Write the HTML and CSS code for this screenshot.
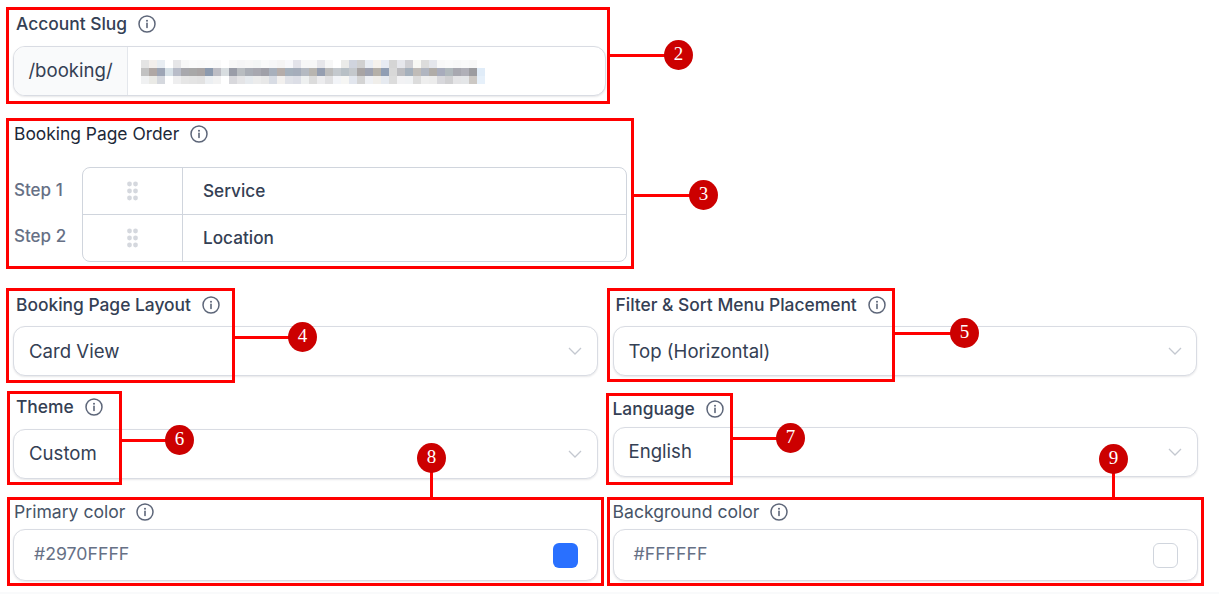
FILE: index.html
```html
<!DOCTYPE html>
<html lang="en">
<head>
    <meta charset="UTF-8">
    <meta name="viewport" content="width=device-width, initial-scale=1.0">
    <title>Booking Page Settings</title>
    <link rel="stylesheet" href="styles.css">
</head>
<body>
    <svg class="defs" width="0" height="0">
        <symbol id="info" viewBox="0 0 18 18">
            <circle cx="9" cy="9" r="8" fill="none" stroke="#5d6679" stroke-width="1.5"/>
            <path d="M9 8.4v4" fill="none" stroke="#5d6679" stroke-width="1.6" stroke-linecap="round"/>
            <circle cx="9" cy="5.7" r="1" fill="#5d6679"/>
        </symbol>
        <symbol id="chevron" viewBox="0 0 14 8">
            <path d="M1 1l6 6 6-6" fill="none" stroke="#c4c8d0" stroke-width="1.3"/>
        </symbol>
        <symbol id="grip" viewBox="0 0 10 20">
            <circle cx="2" cy="3" r="2.4" fill="#d5d8de"/>
            <circle cx="8" cy="3" r="2.4" fill="#d5d8de"/>
            <circle cx="2" cy="10" r="2.4" fill="#d5d8de"/>
            <circle cx="8" cy="10" r="2.4" fill="#d5d8de"/>
            <circle cx="2" cy="17" r="2.4" fill="#d5d8de"/>
            <circle cx="8" cy="17" r="2.4" fill="#d5d8de"/>
        </symbol>
    </svg>

    <div class="page">
        <div class="label-row inset slug-label">
            <span>Account Slug</span>
            <svg class="info"><use href="#info"/></svg>
        </div>
        <div class="slug-input">
            <div class="prefix">/booking/</div>
            <div class="slug-value">
                <svg class="blur" width="344" height="24" viewBox="0 0 43 3" preserveAspectRatio="none" shape-rendering="crispEdges">
                    <g id="row-top">
                        <rect x="0" y="0" width="1" height="1" fill="#e4e4e4"/><rect x="1" y="0" width="1" height="1" fill="#f3efec"/><rect x="2" y="0" width="1" height="1" fill="#e8edf2"/><rect x="4" y="0" width="1" height="1" fill="#e6e6e8"/><rect x="5" y="0" width="1" height="1" fill="#f8f8f8"/><rect x="6" y="0" width="1" height="1" fill="#fbfbfb"/><rect x="7" y="0" width="1" height="1" fill="#fafafa"/><rect x="8" y="0" width="1" height="1" fill="#fbfbfb"/><rect x="9" y="0" width="1" height="1" fill="#fafafa"/><rect x="11" y="0" width="1" height="1" fill="#f8f8f8"/><rect x="12" y="0" width="1" height="1" fill="#f5f5f6"/><rect x="13" y="0" width="1" height="1" fill="#f7f7f7"/><rect x="14" y="0" width="1" height="1" fill="#f4f6f6"/><rect x="15" y="0" width="1" height="1" fill="#fafafa"/><rect x="16" y="0" width="1" height="1" fill="#f7f7f8"/><rect x="17" y="0" width="1" height="1" fill="#f5f4f4"/><rect x="18" y="0" width="1" height="1" fill="#f8f8fb"/><rect x="19" y="0" width="1" height="1" fill="#e3e3ea"/><rect x="20" y="0" width="1" height="1" fill="#f7f7f7"/><rect x="21" y="0" width="1" height="1" fill="#f7f7f7"/><rect x="22" y="0" width="1" height="1" fill="#e6e6ea"/><rect x="23" y="0" width="1" height="1" fill="#f7f7f7"/><rect x="25" y="0" width="1" height="1" fill="#ebebe9"/><rect x="26" y="0" width="1" height="1" fill="#d0d4de"/><rect x="27" y="0" width="1" height="1" fill="#d0d0d0"/><rect x="28" y="0" width="1" height="1" fill="#e9edf3"/><rect x="29" y="0" width="1" height="1" fill="#f6f2ec"/><rect x="30" y="0" width="1" height="1" fill="#e7ebf3"/><rect x="31" y="0" width="1" height="1" fill="#d5d5d5"/><rect x="32" y="0" width="1" height="1" fill="#e6e7ec"/><rect x="33" y="0" width="1" height="1" fill="#d0d0d4"/><rect x="34" y="0" width="1" height="1" fill="#f8f8f4"/><rect x="35" y="0" width="1" height="1" fill="#dcdcdc"/><rect x="36" y="0" width="1" height="1" fill="#e4e6ec"/><rect x="37" y="0" width="1" height="1" fill="#f8f8f8"/><rect x="38" y="0" width="1" height="1" fill="#fafafa"/><rect x="39" y="0" width="1" height="1" fill="#f8f8f8"/><rect x="40" y="0" width="1" height="1" fill="#fafafa"/><rect x="41" y="0" width="1" height="1" fill="#f8f8f8"/>
                    </g>
                    <g id="row-middle">
                        <rect x="0" y="1" width="1" height="1" fill="#c2c2c2"/><rect x="1" y="1" width="1" height="1" fill="#b0a8a5"/><rect x="2" y="1" width="1" height="1" fill="#9da5b5"/><rect x="3" y="1" width="1" height="1" fill="#d6e0e6"/><rect x="4" y="1" width="1" height="1" fill="#b8bcc8"/><rect x="5" y="1" width="1" height="1" fill="#a8a8ad"/><rect x="6" y="1" width="1" height="1" fill="#a8a8a8"/><rect x="7" y="1" width="1" height="1" fill="#a8a4a4"/><rect x="8" y="1" width="1" height="1" fill="#8c9aae"/><rect x="9" y="1" width="1" height="1" fill="#bdbdc4"/><rect x="10" y="1" width="1" height="1" fill="#d8dde0"/><rect x="11" y="1" width="1" height="1" fill="#9a9da8"/><rect x="12" y="1" width="1" height="1" fill="#b8bcc0"/><rect x="13" y="1" width="1" height="1" fill="#a9adb5"/><rect x="14" y="1" width="1" height="1" fill="#a8a8b0"/><rect x="15" y="1" width="1" height="1" fill="#a0a0a8"/><rect x="16" y="1" width="1" height="1" fill="#a8b0bc"/><rect x="17" y="1" width="1" height="1" fill="#b5adaa"/><rect x="18" y="1" width="1" height="1" fill="#a5b0bc"/><rect x="19" y="1" width="1" height="1" fill="#a5adbb"/><rect x="20" y="1" width="1" height="1" fill="#b5bac2"/><rect x="21" y="1" width="1" height="1" fill="#b8b5b0"/><rect x="22" y="1" width="1" height="1" fill="#959eb0"/><rect x="23" y="1" width="1" height="1" fill="#bcbcbc"/><rect x="24" y="1" width="1" height="1" fill="#c4c9ce"/><rect x="25" y="1" width="1" height="1" fill="#b8c0c6"/><rect x="26" y="1" width="1" height="1" fill="#c4c8cc"/><rect x="27" y="1" width="1" height="1" fill="#a8a4a4"/><rect x="28" y="1" width="1" height="1" fill="#9ea2b0"/><rect x="29" y="1" width="1" height="1" fill="#b5b0a8"/><rect x="30" y="1" width="1" height="1" fill="#909eb4"/><rect x="31" y="1" width="1" height="1" fill="#d8d8d8"/><rect x="32" y="1" width="1" height="1" fill="#bcbcc0"/><rect x="33" y="1" width="1" height="1" fill="#a5b0bc"/><rect x="34" y="1" width="1" height="1" fill="#c0bcb8"/><rect x="35" y="1" width="1" height="1" fill="#b0b5c0"/><rect x="36" y="1" width="1" height="1" fill="#b0aca8"/><rect x="37" y="1" width="1" height="1" fill="#a8acbc"/><rect x="38" y="1" width="1" height="1" fill="#b0b8bc"/><rect x="39" y="1" width="1" height="1" fill="#a8a8b0"/><rect x="40" y="1" width="1" height="1" fill="#b0b0b8"/><rect x="41" y="1" width="1" height="1" fill="#9c9ca0"/><rect x="42" y="1" width="1" height="1" fill="#e0ecf8"/>
                    </g>
                    <g id="row-bottom">
                        <rect x="0" y="2" width="1" height="1" fill="#f0f1f2"/><rect x="1" y="2" width="1" height="1" fill="#eaeae6"/><rect x="2" y="2" width="1" height="1" fill="#d5d8de"/><rect x="4" y="2" width="1" height="1" fill="#eeeeef"/><rect x="5" y="2" width="1" height="1" fill="#e6e6e6"/><rect x="6" y="2" width="1" height="1" fill="#e4e4e4"/><rect x="7" y="2" width="1" height="1" fill="#e2e2e2"/><rect x="8" y="2" width="1" height="1" fill="#eceff2"/><rect x="9" y="2" width="1" height="1" fill="#f2f2f2"/><rect x="11" y="2" width="1" height="1" fill="#d8d8dc"/><rect x="12" y="2" width="1" height="1" fill="#e4e4e6"/><rect x="13" y="2" width="1" height="1" fill="#e6eaee"/><rect x="14" y="2" width="1" height="1" fill="#ececec"/><rect x="15" y="2" width="1" height="1" fill="#e8e8e8"/><rect x="16" y="2" width="1" height="1" fill="#d8dce4"/><rect x="17" y="2" width="1" height="1" fill="#f2f0ee"/><rect x="18" y="2" width="1" height="1" fill="#e0e2e8"/><rect x="19" y="2" width="1" height="1" fill="#dcdee6"/><rect x="20" y="2" width="1" height="1" fill="#eef0f0"/><rect x="21" y="2" width="1" height="1" fill="#dcdcdc"/><rect x="22" y="2" width="1" height="1" fill="#ececee"/><rect x="23" y="2" width="1" height="1" fill="#e0e0e2"/><rect x="24" y="2" width="1" height="1" fill="#f2f4f8"/><rect x="25" y="2" width="1" height="1" fill="#f6f6f4"/><rect x="26" y="2" width="1" height="1" fill="#e2e6ee"/><rect x="27" y="2" width="1" height="1" fill="#d4d4d4"/><rect x="28" y="2" width="1" height="1" fill="#eef0f4"/><rect x="29" y="2" width="1" height="1" fill="#f0eeea"/><rect x="30" y="2" width="1" height="1" fill="#e6eaf0"/><rect x="31" y="2" width="1" height="1" fill="#dcdcdc"/><rect x="32" y="2" width="1" height="1" fill="#f2f2f4"/><rect x="33" y="2" width="1" height="1" fill="#f0f2f4"/><rect x="34" y="2" width="1" height="1" fill="#dcdcdc"/><rect x="35" y="2" width="1" height="1" fill="#eeeeee"/><rect x="36" y="2" width="1" height="1" fill="#ececec"/><rect x="37" y="2" width="1" height="1" fill="#d8d8dc"/><rect x="38" y="2" width="1" height="1" fill="#d0d0d2"/><rect x="39" y="2" width="1" height="1" fill="#e4e4e6"/><rect x="40" y="2" width="1" height="1" fill="#e4e6e8"/><rect x="41" y="2" width="1" height="1" fill="#ccc8c4"/><rect x="42" y="2" width="1" height="1" fill="#e6f0fa"/>
                    </g>
                </svg>
            </div>
        </div>

        <div class="label-row order-label">
            <span>Booking Page Order</span>
            <svg class="info"><use href="#info"/></svg>
        </div>
        <div class="order">
            <div class="steps">
                <div class="step">Step 1</div>
                <div class="step">Step 2</div>
            </div>
            <div class="order-table">
                <div class="order-row">
                    <div class="grip-cell"><svg class="grip"><use href="#grip"/></svg></div>
                    <div class="order-name">Service</div>
                </div>
                <div class="order-row">
                    <div class="grip-cell"><svg class="grip"><use href="#grip"/></svg></div>
                    <div class="order-name">Location</div>
                </div>
            </div>
        </div>

        <div class="columns">
            <div class="column">
                <div class="label-row inset layout-label">
                    <span>Booking Page Layout</span>
                    <svg class="info"><use href="#info"/></svg>
                </div>
                <div class="select layout-select">
                    <span>Card View</span>
                    <svg class="chevron"><use href="#chevron"/></svg>
                </div>
                <div class="label-row inset theme-label">
                    <span>Theme</span>
                    <svg class="info"><use href="#info"/></svg>
                </div>
                <div class="select theme-select">
                    <span>Custom</span>
                    <svg class="chevron"><use href="#chevron"/></svg>
                </div>
                <div class="label-row color-label primary-label">
                    <span>Primary color</span>
                    <svg class="info"><use href="#info"/></svg>
                </div>
                <div class="color-input">
                    <span>#2970FFFF</span>
                    <div class="swatch swatch-blue"></div>
                </div>
            </div>
            <div class="column">
                <div class="label-row inset layout-label">
                    <span>Filter &amp; Sort Menu Placement</span>
                    <svg class="info"><use href="#info"/></svg>
                </div>
                <div class="select layout-select placement-select">
                    <span>Top (Horizontal)</span>
                    <svg class="chevron"><use href="#chevron"/></svg>
                </div>
                <div class="label-row language-label">
                    <span>Language</span>
                    <svg class="info"><use href="#info"/></svg>
                </div>
                <div class="select language-select wide">
                    <span>English</span>
                    <svg class="chevron"><use href="#chevron"/></svg>
                </div>
                <div class="label-row color-label background-label">
                    <span>Background color</span>
                    <svg class="info"><use href="#info"/></svg>
                </div>
                <div class="color-input wide">
                    <span>#FFFFFF</span>
                    <div class="swatch swatch-white"></div>
                </div>
            </div>
        </div>
    </div>

    <!-- red callouts drawn over the form -->
    <div class="box box-2"></div>
    <div class="box box-3"></div>
    <div class="box box-4"></div>
    <div class="box box-5"></div>
    <div class="box box-6"></div>
    <div class="box box-7"></div>
    <div class="box box-8"></div>
    <div class="box box-9"></div>
    <div class="line line-2"></div>
    <div class="line line-3"></div>
    <div class="line line-4"></div>
    <div class="line line-5"></div>
    <div class="line line-6"></div>
    <div class="line line-7"></div>
    <div class="line line-8"></div>
    <div class="line line-9"></div>
    <div class="badge badge-2">2</div>
    <div class="badge badge-3">3</div>
    <div class="badge badge-4">4</div>
    <div class="badge badge-5">5</div>
    <div class="badge badge-6">6</div>
    <div class="badge badge-7">7</div>
    <div class="badge badge-8">8</div>
    <div class="badge badge-9">9</div>
</body>
</html>
```

FILE: styles.css
```css
* {
    box-sizing: border-box;
}

body {
    margin: 0;
    background-color: white;
    font-family: Inter, "Liberation Sans", sans-serif;
    color: #344054;
}

.defs {
    position: absolute;
}

.page {
    width: 1219px;
    height: 594px;
    padding: 14px 22px 0 13px;
    border-bottom: 2px solid #f9fafb;
    overflow: hidden;
}

.label-row {
    display: flex;
    align-items: center;
    gap: 11px;
    height: 20px;
    font-size: 17.4px;
    font-weight: 500;
    white-space: nowrap;
}

.label-row span {
    margin-top: -2px;
}

.label-row.inset {
    padding-left: 3px;
}

.info {
    width: 18px;
    height: 18px;
    flex-shrink: 0;
}

.order-label {
    margin-top: 28px;
    padding-left: 1px;
    color: #1d2939;
    font-weight: 400;
}

.slug-input {
    display: flex;
    width: 593px;
    height: 50px;
    margin-top: 12px;
    background-color: white;
    border: 1px solid #d9dce3;
    border-radius: 12px;
    box-shadow: 0 1px 2px rgba(16, 24, 40, 0.1);
    overflow: hidden;
}

.prefix {
    display: flex;
    align-items: center;
    justify-content: center;
    width: 114px;
    padding-bottom: 2px;
    background-color: #f9fafb;
    border-right: 1px solid #e4e7ec;
    font-size: 18.6px;
}

.slug-value {
    display: flex;
    align-items: center;
    padding-left: 13px;
}

.blur {
    display: block;
    margin-top: 2px;
}

.order {
    display: flex;
    margin-top: 23px;
}

.steps {
    width: 69px;
    padding-left: 1px;
}

.step {
    height: 46px;
    padding-top: 13px;
    font-size: 17px;
    font-weight: 500;
    color: #667085;
}

.order-table {
    width: 545px;
    height: 95px;
    border: 1px solid #d0d5dd;
    border-radius: 8px;
}

.order-row {
    display: flex;
    height: 46px;
}

.order-row + .order-row {
    height: 47px;
    border-top: 1px solid #d0d5dd;
}

.grip-cell {
    display: flex;
    align-items: center;
    justify-content: center;
    width: 100px;
    border-right: 1px solid #d0d5dd;
}

.grip {
    width: 13px;
    height: 20px;
}

.order-name {
    display: flex;
    align-items: center;
    padding: 0 0 2px 20px;
    font-size: 17.2px;
    font-weight: 500;
}

.columns {
    display: flex;
    gap: 15px;
    margin-top: 33px;
}

.column {
    width: 585px;
}

.select,
.color-input {
    display: flex;
    align-items: center;
    justify-content: space-between;
    background-color: white;
    border: 1px solid #d9dce3;
    border-radius: 12px;
    box-shadow: 0 1px 2px rgba(16, 24, 40, 0.1);
}

.select {
    height: 50px;
    padding: 0 15px;
    font-size: 18.6px;
}

.chevron {
    width: 14px;
    height: 8px;
}

.wide {
    margin-right: -1px;
}

.layout-select {
    margin-top: 11px;
}

.placement-select {
    padding-right: 14px;
}

.theme-label {
    margin-top: 21px;
}

.theme-select {
    margin-top: 12px;
}

.theme-select span {
    margin-top: -3px;
}

.language-label {
    margin-top: 23px;
}

.language-select {
    margin-top: 8px;
}

.language-select span {
    margin-top: -2px;
}

.primary-label {
    margin-top: 23px;
    padding-left: 1px;
}

.background-label {
    margin-top: 25px;
}

.color-label {
    color: #475467;
    font-size: 17.6px;
    font-weight: 400;
}

.color-input {
    height: 52px;
    margin-top: 7px;
    padding: 0 19px 0 20px;
    font-size: 17.7px;
    color: #667085;
}

.color-input span {
    margin-top: -4px;
}

.swatch {
    width: 25px;
    height: 25px;
    border-radius: 6px;
}

.swatch-blue {
    background-color: #2970ff;
}

.swatch-white {
    background-color: white;
    border: 1px solid #d0d5dd;
}

/* callouts */
.box,
.line,
.badge {
    position: absolute;
}

.box {
    border: 3px solid #ff0000;
}

.box-2 { left: 6px; top: 7px; width: 604px; height: 97px; }
.box-3 { left: 6px; top: 118px; width: 628px; height: 151px; }
.box-4 { left: 6px; top: 288px; width: 229px; height: 95px; }
.box-5 { left: 607px; top: 288px; width: 288px; height: 94px; }
.box-6 { left: 7px; top: 391px; width: 115px; height: 94px; }
.box-7 { left: 606px; top: 393px; width: 127px; height: 92px; }
.box-8 { left: 7px; top: 497px; width: 597px; height: 89px; }
.box-9 { left: 607px; top: 497px; width: 597px; height: 89px; }

.line {
    background-color: #ff0000;
}

.line-2 { left: 610px; top: 54px; width: 56px; height: 3px; }
.line-3 { left: 634px; top: 194px; width: 56px; height: 3px; }
.line-4 { left: 235px; top: 336px; width: 56px; height: 3px; }
.line-5 { left: 895px; top: 332px; width: 56px; height: 3px; }
.line-6 { left: 122px; top: 439px; width: 45px; height: 3px; }
.line-7 { left: 733px; top: 437px; width: 46px; height: 3px; }
.line-8 { left: 430px; top: 470px; width: 3px; height: 27px; }
.line-9 { left: 1112px; top: 470px; width: 3px; height: 27px; }

.badge {
    display: flex;
    align-items: center;
    justify-content: center;
    width: 29px;
    height: 30px;
    padding-bottom: 2px;
    background-color: #cc0000;
    border-radius: 50%;
    font-family: "Liberation Serif", serif;
    font-size: 19px;
    color: white;
}

.badge-2 { left: 664px; top: 40px; }
.badge-3 { left: 689px; top: 180px; }
.badge-4 { left: 288px; top: 322px; }
.badge-5 { left: 950px; top: 318px; }
.badge-6 { left: 165px; top: 425px; }
.badge-7 { left: 776px; top: 423px; }
.badge-8 { left: 417px; top: 443px; }
.badge-9 { left: 1099px; top: 444px; }
```
